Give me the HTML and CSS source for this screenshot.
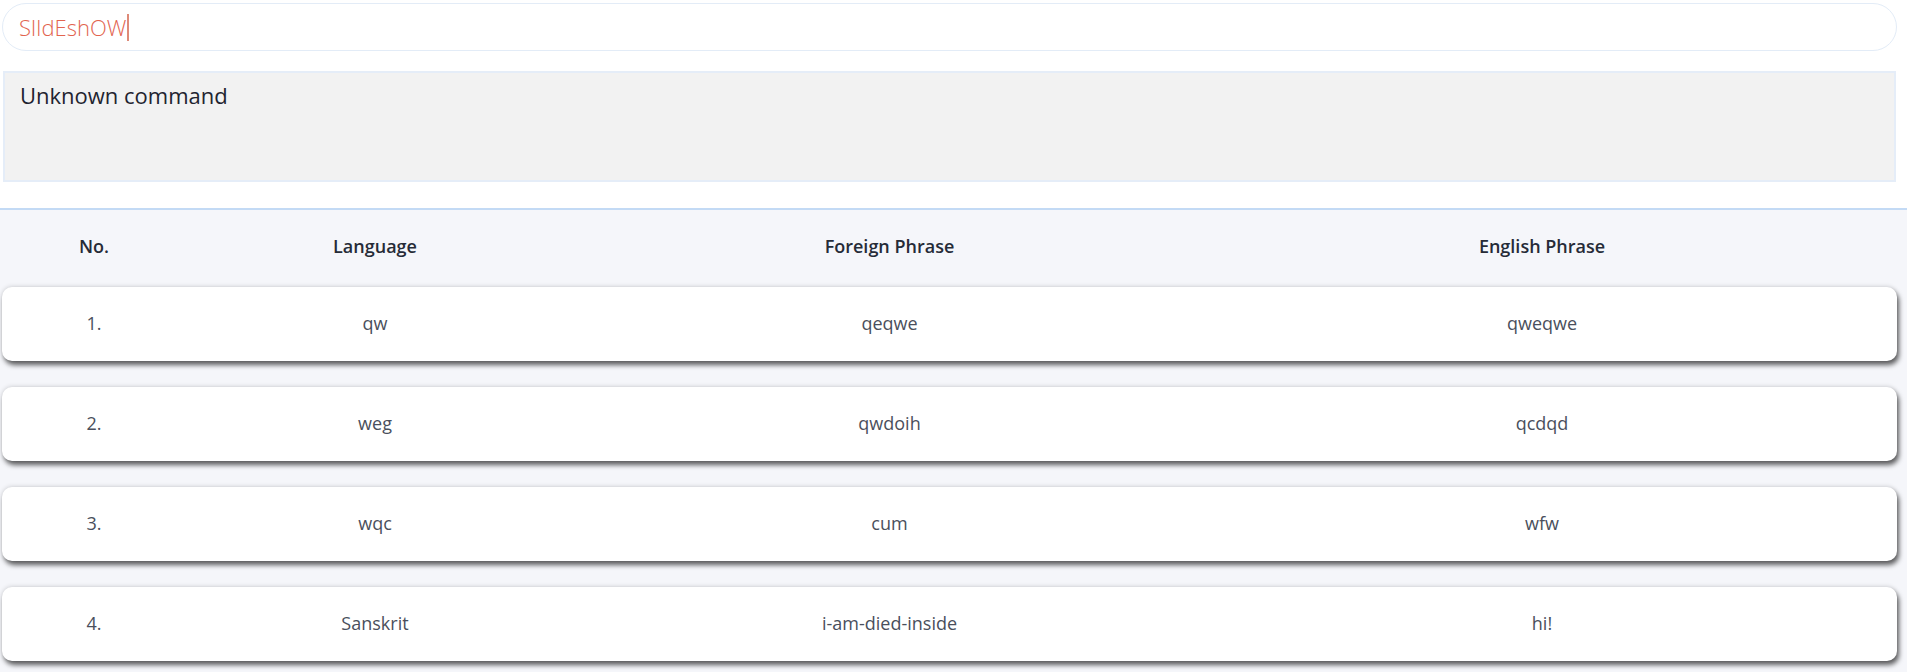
FILE: index.html
```html
<!DOCTYPE html>
<html>
<head>
<meta charset="utf-8">
<link rel="stylesheet" href="styles.css">
</head>
<body>
<div class="page">
  <div class="command"><span class="command-text">SlIdEshOW</span><span class="caret"></span></div>
  <div class="result">Unknown command</div>
  <div class="table">
    <div class="thead">
      <div>No.</div><div>Language</div><div>Foreign Phrase</div><div>English Phrase</div>
    </div>
    <div class="row"><div>1.</div><div>qw</div><div>qeqwe</div><div>qweqwe</div></div>
    <div class="row"><div>2.</div><div>weg</div><div>qwdoih</div><div>qcdqd</div></div>
    <div class="row"><div>3.</div><div>wqc</div><div>cum</div><div>wfw</div></div>
    <div class="row"><div>4.</div><div>Sanskrit</div><div>i-am-died-inside</div><div>hi!</div></div>
  </div>
</div>
</body>
</html>
```

FILE: styles.css
```css
html, body {
  margin: 0;
  padding: 0;
  background: #ffffff;
  overflow: hidden;
}
body {
  font-family: "Open Sans", "Noto Sans", sans-serif;
}
.page {
  display: flex;
  flex-direction: column;
}
.command {
  margin: 3px 10px 0 2px;
  height: 48px;
  box-sizing: border-box;
  border: 1px solid #e3ecf7;
  border-radius: 24px;
  padding-left: 16px;
  display: flex;
  align-items: center;
  font-weight: 300;
  font-size: 22px;
  color: #e2644f;
}
.caret {
  display: inline-block;
  width: 2px;
  height: 27px;
  background: #de8a78;
  margin-left: 1px;
}
.result {
  margin: 20px 11px 0 3px;
  height: 111px;
  box-sizing: border-box;
  background: #f2f2f2;
  border: 2px solid #e5edf8;
  padding: 7px 15px;
  font-size: 22px;
  color: #1f2430;
}
.table {
  margin-top: 26px;
  border-top: 2px solid #c3daf5;
  background: #f5f6fa;
  padding-bottom: 30px;
}
.thead, .row {
  display: grid;
  grid-template-columns: 184px 378px 651px 654px 1fr;
  align-items: center;
  text-align: center;
}
.thead {
  height: 77px;
  box-sizing: border-box;
  padding-bottom: 5px;
  margin: 0 10px 0 2px;
  font-weight: 600;
  font-size: 18px;
  color: #262b37;
}
.row {
  height: 74px;
  box-sizing: border-box;
  padding-bottom: 2px;
  margin: 0 10px 26px 2px;
  background: #ffffff;
  border-radius: 10px;
  box-shadow: 2px 4px 5px rgba(0, 0, 0, 0.62), 0 -1px 4px rgba(0, 0, 0, 0.12);
  font-size: 18px;
  color: #4a4f5c;
}
```
